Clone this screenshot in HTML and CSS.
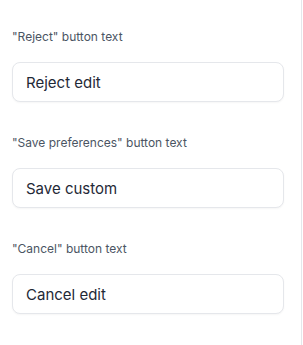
FILE: index.html
```html
<!DOCTYPE html>
<html>
<head>
    <link rel="stylesheet" href="styles.css">
</head>
<body>
    <div class="panel">
        <div class="field">
            <label class="field-label" for="reject-text">"Reject" button text</label>
            <input class="field-input" id="reject-text" type="text" value="Reject edit">
        </div>
        <div class="field">
            <label class="field-label" for="save-text">"Save preferences" button text</label>
            <input class="field-input" id="save-text" type="text" value="Save custom">
        </div>
        <div class="field">
            <label class="field-label" for="cancel-text">"Cancel" button text</label>
            <input class="field-input" id="cancel-text" type="text" value="Cancel edit">
        </div>
    </div>
</body>
</html>
```

FILE: styles.css
```css
body {
    margin: 0;
    font-family: Inter, "Liberation Sans", sans-serif;
    background: #fff;
    color: #1f2937;
}

.panel {
    width: 302px;
    min-height: 345px;
    box-sizing: border-box;
    border-right: 1px solid #e5e7eb;
    padding: 29px 17px 0 12px;
    display: flex;
    flex-direction: column;
    gap: 33px;
}

.field {
    display: flex;
    flex-direction: column;
}

.field-label {
    font-size: 12px;
    line-height: 16px;
    color: #4b5563;
    margin-bottom: 17px;
}

.field-input {
    height: 40px;
    box-sizing: border-box;
    border: 1px solid #e5e7eb;
    border-radius: 8px;
    padding: 0 13px;
    font-family: inherit;
    font-size: 15px;
    color: #1f2937;
    background: #fff;
    box-shadow: 0 1px 2px rgba(0, 0, 0, 0.04);
    outline: none;
}
```
